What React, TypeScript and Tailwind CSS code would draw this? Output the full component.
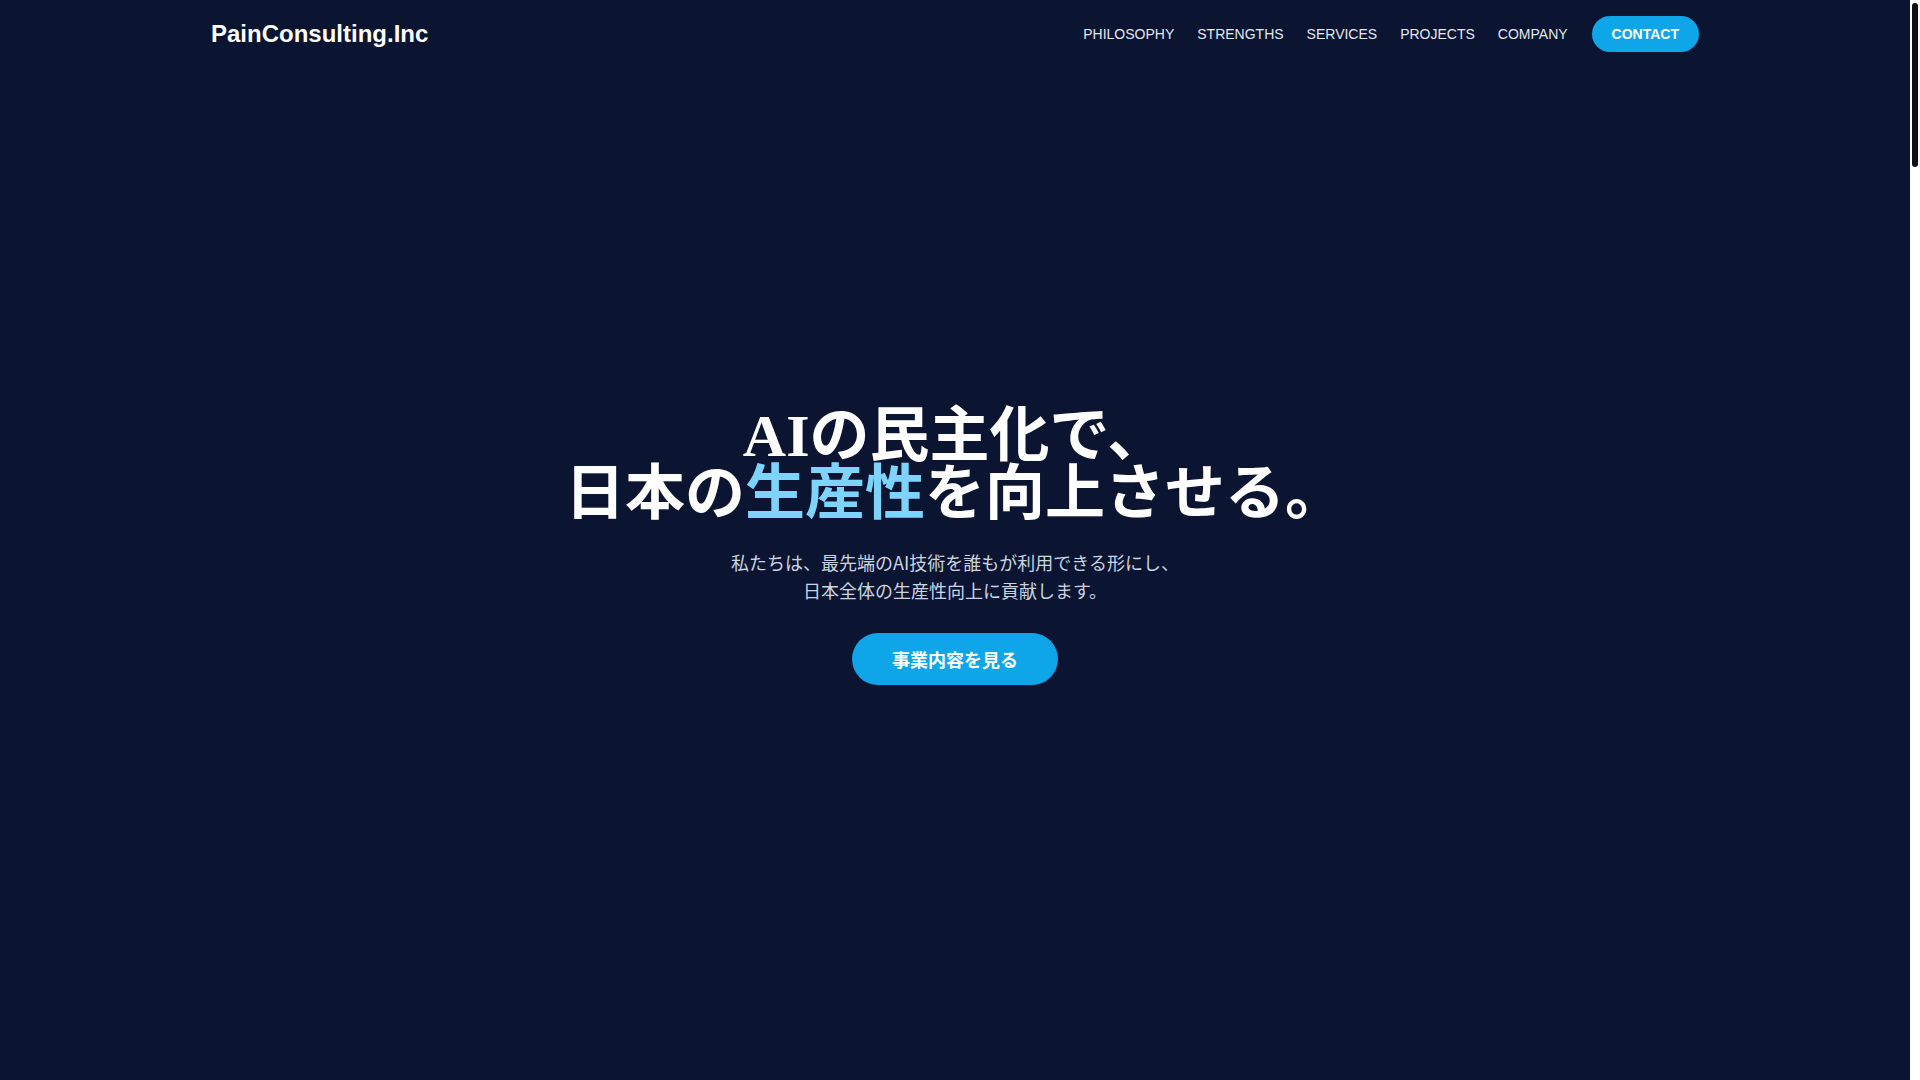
import React from "react";

const navItems = ["PHILOSOPHY", "STRENGTHS", "SERVICES", "PROJECTS", "COMPANY"];

function Header() {
  return (
    <header className="bg-[#0b1430]">
      <div className="mx-auto max-w-[1488px] flex items-center justify-between py-4 font-['Liberation_Sans',Arial,sans-serif]">
        <a href="#" className="text-2xl font-bold text-white">
          PainConsulting.Inc
        </a>
        <nav className="flex items-center gap-[23px]">
          {navItems.map((item) => (
            <a key={item} href="#" className="text-sm text-slate-200 hover:text-white">
              {item}
            </a>
          ))}
          <a
            href="#"
            className="ml-px rounded-full bg-[#0ea5e9] px-5 py-2 text-sm font-bold text-white hover:bg-sky-400"
          >
            CONTACT
          </a>
        </nav>
      </div>
    </header>
  );
}

function Hero() {
  return (
    <section className="h-[1012px] flex flex-col items-center justify-center pb-[56px] text-center">
      <h1 className="text-6xl leading-[58px] font-bold text-white font-['Liberation_Serif','Noto_Sans_CJK_JP',serif]">
        AIの民主化で、
        <br />
        日本の<span className="text-[#7dd3fc]">生産性</span>を向上させる。
      </h1>
      <p className="mt-[25px] text-lg leading-7 text-slate-300 font-['Noto_Sans_CJK_JP','Noto_Sans',sans-serif]">
        私たちは、最先端のAI技術を誰もが利用できる形にし、
        <br />
        日本全体の生産性向上に貢献します。
      </p>
      <a
        href="#"
        className="mt-[29px] rounded-full bg-[#0ea5e9] px-10 py-3 text-lg leading-7 font-bold text-white font-['Noto_Sans_CJK_JP','Noto_Sans',sans-serif] hover:bg-sky-400"
      >
        事業内容を見る
      </a>
    </section>
  );
}

// page scrollbar as it shows in the capture (10px track, thin dark thumb)
function ScrollTrack() {
  return (
    <div className="w-[10px] shrink-0 bg-white pt-[3px]">
      <div className="mx-auto h-[164px] w-[6px] rounded-full bg-[#111111]" />
    </div>
  );
}

export default function App() {
  return (
    <div className="flex h-screen overflow-hidden bg-[#0b1430]">
      <main className="flex-1 min-w-0">
        <Header />
        <Hero />
      </main>
      <ScrollTrack />
    </div>
  );
}
